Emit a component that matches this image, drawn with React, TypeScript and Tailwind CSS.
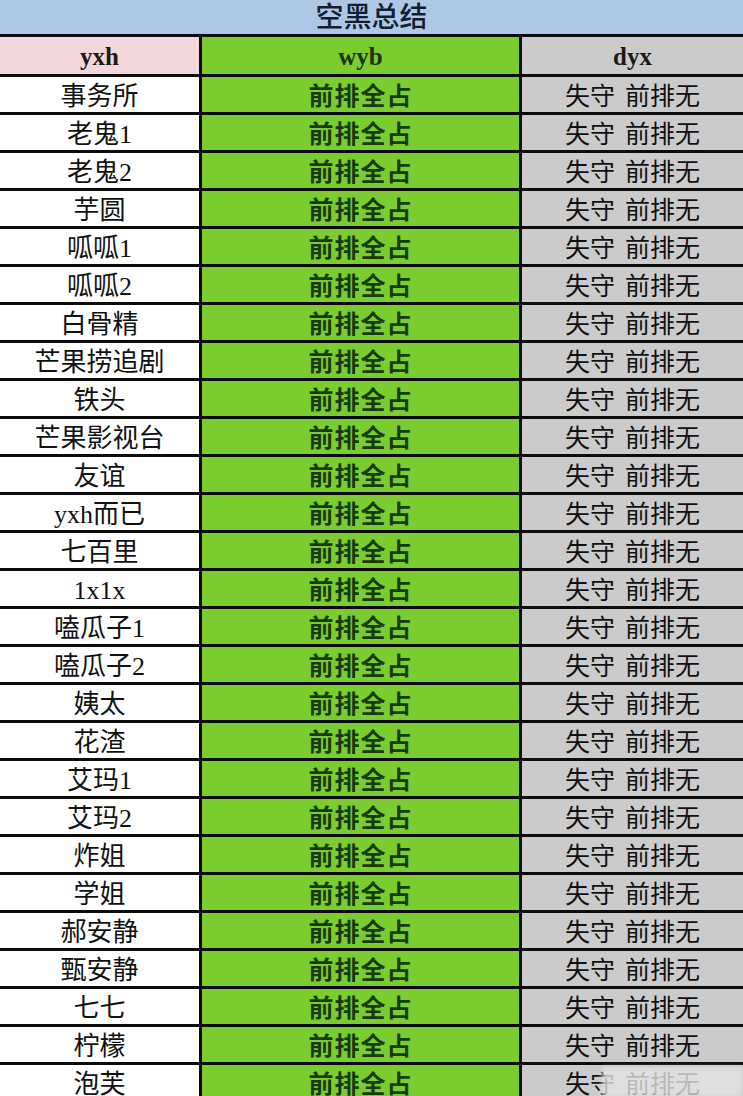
const names = [
  "事务所",
  "老鬼1",
  "老鬼2",
  "芋圆",
  "呱呱1",
  "呱呱2",
  "白骨精",
  "芒果捞追剧",
  "铁头",
  "芒果影视台",
  "友谊",
  "yxh而已",
  "七百里",
  "1x1x",
  "嗑瓜子1",
  "嗑瓜子2",
  "姨太",
  "花渣",
  "艾玛1",
  "艾玛2",
  "炸姐",
  "学姐",
  "郝安静",
  "甄安静",
  "七七",
  "柠檬",
  "泡芙",
];

const font = { fontFamily: '"Liberation Serif", "Noto Sans CJK SC", serif' };

export default function App() {
  return (
    <div className="w-[743px] h-[1096px] overflow-hidden bg-white" style={font}>
      {/* title */}
      <div className="h-[34px] bg-[#adc7e7] flex items-center justify-center pt-[2px] text-[28px] leading-none text-[#161d30] font-medium">
        空黑总结
      </div>

      <div className="grid grid-cols-[199px_317px_1fr] gap-[3px] bg-[#0c0c0c] border-t-[3px] border-[#0c0c0c]">
        <div className="h-[37px] pt-[3px] bg-[#f3d6dc] flex items-center justify-center text-[25px] font-bold text-[#1a1a1a]">
          yxh
        </div>
        <div className="h-[37px] pt-[3px] bg-[#7bcd2f] flex items-center justify-center text-[25px] font-bold text-[#1d3312]">
          wyb
        </div>
        <div className="h-[37px] pt-[3px] bg-[#cbcbcb] flex items-center justify-center text-[25px] font-bold text-[#1a1a1a]">
          dyx
        </div>

        {names.map((name, i) => (
          <Row key={i} name={name} last={i === names.length - 1} />
        ))}
      </div>
    </div>
  );
}

function Row({ name, last }: { name: string; last: boolean }) {
  return (
    <>
      <div className="h-[35px] pt-[4px] bg-white flex items-center justify-center text-[26px] text-[#111]">
        {name}
      </div>
      <div className="h-[35px] pt-[4px] bg-[#7bcd2f] flex items-center justify-center text-[25px] font-bold text-[#163b0e] tracking-[1px]">
        前排全占
      </div>
      <div className="relative h-[35px] pt-[4px] bg-[#cbcbcb] flex items-center justify-center gap-[10px] text-[25px] text-[#111]">
        <span>失守</span>
        <span>前排无</span>
        {last && (
          <div className="absolute left-[80px] top-[2px] w-[140px] h-[30px] bg-[#e4e4e4]/80 blur-[2px]" />
        )}
      </div>
    </>
  );
}
